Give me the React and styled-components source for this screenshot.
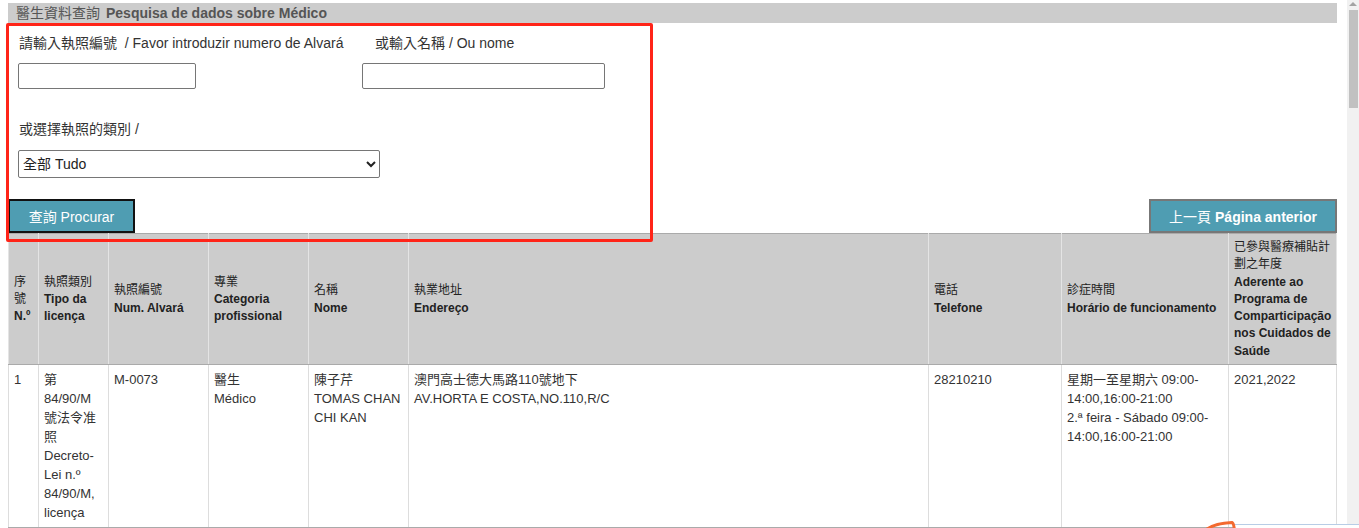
import React from "react";
import styled, { createGlobalStyle } from "styled-components";

const GlobalStyle = createGlobalStyle`
  html, body {
    margin: 0;
    padding: 0;
    overflow: hidden;
    background: #fff;
  }
  body {
    font-family: "Liberation Sans", Arial, "Noto Sans CJK TC", sans-serif;
    color: #333;
  }
`;

const Shell = styled.div`
  position: relative;
  display: grid;
  grid-template-columns: 1fr 12px;
  height: 100vh;
  overflow: hidden;
`;

const Main = styled.div`
  padding: 3px 10px 0 8px;
  overflow: hidden;
  min-width: 0;
`;

const TitleBar = styled.div`
  background: #cccccc;
  height: 20px;
  line-height: 20px;
  padding-left: 8px;
  font-size: 14px;
  color: #555;
  white-space: nowrap;
  b {
    margin-left: 6px;
  }
`;

const SearchForm = styled.form`
  position: relative;
  padding-top: 10px;
`;

const Highlight = styled.div`
  position: absolute;
  left: -2px;
  top: 0;
  width: 647px;
  height: 219px;
  border: 3px solid #ff2418;
  border-radius: 2px;
  box-sizing: border-box;
  pointer-events: none;
  z-index: 3;
`;

const FieldRow = styled.div`
  display: flex;
`;

const Field = styled.div`
  width: ${(p) => p.width}px;
  padding-left: ${(p) => p.inset ?? 10}px;
  box-sizing: border-box;
`;

const Label = styled.div`
  font-size: 14px;
  line-height: 20px;
  height: 20px;
  padding-left: ${(p) => p.indent || 1}px;
  white-space: nowrap;
  color: #333;
`;

const TextInput = styled.input`
  display: block;
  margin-top: 10px;
  width: ${(p) => p.width}px;
  height: 26px;
  box-sizing: border-box;
  border: 1px solid #767676;
  border-radius: 2px;
  padding: 0 4px;
  font-size: 14px;
`;

const TypeBlock = styled.div`
  margin-top: 30px;
  padding-left: 10px;
`;

const Select = styled.select`
  display: block;
  margin-top: 11px;
  width: 362px;
  height: 28px;
  box-sizing: border-box;
  border: 1px solid #767676;
  border-radius: 2px;
  font-family: "Liberation Sans", Arial, "Noto Sans CJK TC", sans-serif;
  font-size: 14px;
  color: #222;
  background: #fff;
`;

const ButtonRow = styled.div`
  display: flex;
  justify-content: space-between;
  margin-top: 21px;
`;

const TealButton = styled.button`
  height: 34px;
  width: ${(p) => p.width}px;
  box-sizing: border-box;
  background: #4f9db2;
  color: #fff;
  border: ${(p) => (p.muted ? "2px solid #777" : "2px solid #111")};
  font-family: "Liberation Sans", Arial, "Noto Sans CJK TC", sans-serif;
  font-size: 14px;
  padding: 0;
  cursor: pointer;
  b {
    margin-left: 4px;
  }
`;

const Table = styled.table`
  width: 100%;
  table-layout: fixed;
  border-collapse: collapse;
  border: 1px solid #aaa;
`;

const Th = styled.th`
  background: #cccccc;
  border: 1px solid #e4e4e4;
  border-top-color: #aaa;
  border-bottom-color: #aaa;
  padding: 5px 3px 4px 5px;
  text-align: left;
  vertical-align: middle;
  font-size: 12px;
  line-height: 17.3px;
  font-weight: normal;
  color: #222;
  b {
    font-weight: bold;
  }
`;

const Td = styled.td`
  border: 1px solid #dddddd;
  border-bottom-color: #aaa;
  padding: 5px 4px 5px 5px;
  vertical-align: top;
  font-size: 13px;
  line-height: 19px;
  color: #333;
  word-wrap: break-word;
`;

const ScrollRail = styled.div`
  background: #f1f1f1;
  display: flex;
  flex-direction: column;
  align-items: center;
`;

const ScrollArrow = styled.div`
  width: 0;
  height: 0;
  margin-top: 2px;
  border-left: 4px solid transparent;
  border-right: 4px solid transparent;
  border-bottom: 4px solid #a3a3a3;
`;

const ScrollThumb = styled.div`
  margin-top: 4px;
  width: 9px;
  height: 98px;
  background: #c1c1c1;
`;

const CornerWidget = styled.div`
  position: absolute;
  left: 1233px;
  right: 0;
  top: 524px;
  height: 10px;
  background: #fff;
  border-top: 1px solid #b8cde6;
  border-left: 1px solid #b8cde6;
  z-index: 4;
`;

const CornerMark = styled.svg`
  position: absolute;
  left: 1205px;
  top: 518px;
  z-index: 5;
`;

// the last column takes whatever width is left
const columns = [30, 70, 100, 100, 100, 520, 133, 167, null];

const headers = [
  ["序號", "N.º"],
  ["執照類別", "Tipo da licença"],
  ["執照編號", "Num. Alvará"],
  ["專業", "Categoria profissional"],
  ["名稱", "Nome"],
  ["執業地址", "Endereço"],
  ["電話", "Telefone"],
  ["診症時間", "Horário de funcionamento"],
  ["已參與醫療補貼計劃之年度", "Aderente ao Programa de Comparticipação nos Cuidados de Saúde"],
];

const rows = [
  [
    ["1"],
    ["第 84/90/M 號法令准照 Decreto-Lei n.º 84/90/M, licença"],
    ["M-0073"],
    ["醫生", "Médico"],
    ["陳子芹", "TOMAS CHAN CHI KAN"],
    ["澳門高士德大馬路110號地下", "AV.HORTA E COSTA,NO.110,R/C"],
    ["28210210"],
    ["星期一至星期六 09:00-14:00,16:00-21:00", "2.ª feira - Sábado 09:00-14:00,16:00-21:00"],
    ["2021,2022"],
  ],
];

export default function App() {
  return (
    <>
      <GlobalStyle />
      <Shell>
        <Main>
          <TitleBar>
            醫生資料查詢<b>Pesquisa de dados sobre Médico</b>
          </TitleBar>

          <SearchForm onSubmit={(e) => e.preventDefault()}>
            <Highlight />
            <FieldRow>
              <Field width={354}>
                <Label>請輸入執照編號&nbsp; / Favor introduzir numero de Alvará</Label>
                <TextInput width={178} />
              </Field>
              <Field width={300} inset={0}>
                <Label indent={13}>或輸入名稱 / Ou nome</Label>
                <TextInput width={243} />
              </Field>
            </FieldRow>

            <TypeBlock>
              <Label>或選擇執照的類別 /</Label>
              <Select defaultValue="all">
                <option value="all">全部 Tudo</option>
              </Select>
            </TypeBlock>

            <ButtonRow>
              <TealButton width={127} type="submit">
                查詢 Procurar
              </TealButton>
              <TealButton width={188} muted type="button">
                上一頁<b>Página anterior</b>
              </TealButton>
            </ButtonRow>
          </SearchForm>

          <Table>
            <colgroup>
              {columns.map((w, i) => (
                <col key={i} style={w ? { width: w } : undefined} />
              ))}
            </colgroup>
            <thead>
              <tr>
                {headers.map(([zh, pt]) => (
                  <Th key={pt}>
                    {zh}
                    <br />
                    <b>{pt}</b>
                  </Th>
                ))}
              </tr>
            </thead>
            <tbody>
              {rows.map((row, r) => (
                <tr key={r}>
                  {row.map((lines, c) => (
                    <Td key={c}>
                      {lines.map((line, i) => (
                        <React.Fragment key={i}>
                          {i > 0 && <br />}
                          {line}
                        </React.Fragment>
                      ))}
                    </Td>
                  ))}
                </tr>
              ))}
            </tbody>
          </Table>
        </Main>

        <ScrollRail>
          <ScrollArrow />
          <ScrollThumb />
        </ScrollRail>

        <CornerMark width="34" height="12" viewBox="0 0 34 12">
          <path
            d="M2 11 C8 7 16 5 27 4.5 C28.5 5 29 8 29.5 12"
            fill="none"
            stroke="#f36a30"
            strokeWidth="3"
            strokeLinecap="round"
          />
        </CornerMark>
        <CornerWidget />
      </Shell>
    </>
  );
}
